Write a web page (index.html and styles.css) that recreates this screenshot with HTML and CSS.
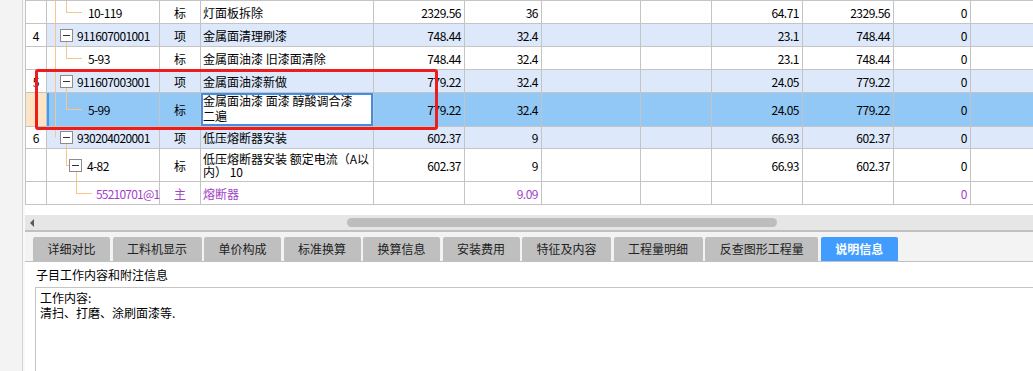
FILE: index.html
```html
<!DOCTYPE html>
<html lang="zh-CN">
<head>
    <meta charset="UTF-8">
    <title>分部分项</title>
    <link rel="stylesheet" href="styles.css">
</head>
<body>
    <div class="app">
        <div class="side"></div>
        <div class="main">
            <div class="grid-wrap">
                <div class="grid">
                    <div class="row">
                        <div class="seq"></div>
                        <div class="code tree-leaf"><span class="code-text">10-119</span></div>
                        <div class="type">标</div>
                        <div class="name">灯面板拆除</div>
                        <div class="num">2329.56</div>
                        <div class="num">36</div>
                        <div></div><div></div>
                        <div class="num">64.71</div>
                        <div class="num">2329.56</div>
                        <div class="num">0</div>
                        <div></div>
                    </div>
                    <div class="row item">
                        <div class="seq">4</div>
                        <div class="code tree-item"><span class="tb"></span><span class="code-text">911607001001</span></div>
                        <div class="type">项</div>
                        <div class="name">金属面清理刷漆</div>
                        <div class="num">748.44</div>
                        <div class="num">32.4</div>
                        <div></div><div></div>
                        <div class="num">23.1</div>
                        <div class="num">748.44</div>
                        <div class="num">0</div>
                        <div></div>
                    </div>
                    <div class="row">
                        <div class="seq"></div>
                        <div class="code tree-leaf"><span class="code-text">5-93</span></div>
                        <div class="type">标</div>
                        <div class="name">金属面油漆 旧漆面清除</div>
                        <div class="num">748.44</div>
                        <div class="num">32.4</div>
                        <div></div><div></div>
                        <div class="num">23.1</div>
                        <div class="num">748.44</div>
                        <div class="num">0</div>
                        <div></div>
                    </div>
                    <div class="row item">
                        <div class="seq">5</div>
                        <div class="code tree-item"><span class="tb"></span><span class="code-text">911607003001</span></div>
                        <div class="type">项</div>
                        <div class="name">金属面油漆新做</div>
                        <div class="num">779.22</div>
                        <div class="num">32.4</div>
                        <div></div><div></div>
                        <div class="num">24.05</div>
                        <div class="num">779.22</div>
                        <div class="num">0</div>
                        <div></div>
                    </div>
                    <div class="row sel tall">
                        <div class="seq"></div>
                        <div class="code tree-leaf"><span class="code-text">5-99</span></div>
                        <div class="type">标</div>
                        <div class="name editing"><span>金属面油漆 面漆 醇酸调合漆 <span class="keep">二遍</span></span></div>
                        <div class="num">779.22</div>
                        <div class="num">32.4</div>
                        <div></div><div></div>
                        <div class="num">24.05</div>
                        <div class="num">779.22</div>
                        <div class="num">0</div>
                        <div></div>
                    </div>
                    <div class="row item short">
                        <div class="seq">6</div>
                        <div class="code tree-item last"><span class="tb"></span><span class="code-text">930204020001</span></div>
                        <div class="type">项</div>
                        <div class="name">低压熔断器安装</div>
                        <div class="num">602.37</div>
                        <div class="num">9</div>
                        <div></div><div></div>
                        <div class="num">66.93</div>
                        <div class="num">602.37</div>
                        <div class="num">0</div>
                        <div></div>
                    </div>
                    <div class="row tall-b">
                        <div class="seq"></div>
                        <div class="code tree-sub"><span class="tb"></span><span class="code-text">4-82</span></div>
                        <div class="type">标</div>
                        <div class="name wrap">低压熔断器安装 额定电流（A以内） 10</div>
                        <div class="num">602.37</div>
                        <div class="num">9</div>
                        <div></div><div></div>
                        <div class="num">66.93</div>
                        <div class="num">602.37</div>
                        <div class="num">0</div>
                        <div></div>
                    </div>
                    <div class="row mat">
                        <div class="seq"></div>
                        <div class="code tree-leaf2"><span class="code-text">55210701@1</span></div>
                        <div class="type">主</div>
                        <div class="name">熔断器</div>
                        <div class="num"></div>
                        <div class="num">9.09</div>
                        <div></div><div></div>
                        <div class="num"></div>
                        <div class="num"></div>
                        <div class="num">0</div>
                        <div></div>
                    </div>
                </div>
                <div class="mark"></div>
            </div>

            <div class="hscroll">
                <span class="arrow"></span>
                <span class="thumb"></span>
            </div>

            <div class="tabs">
                <button class="tab-button">详细对比</button>
                <button class="tab-button">工料机显示</button>
                <button class="tab-button">单价构成</button>
                <button class="tab-button">标准换算</button>
                <button class="tab-button">换算信息</button>
                <button class="tab-button">安装费用</button>
                <button class="tab-button">特征及内容</button>
                <button class="tab-button">工程量明细</button>
                <button class="tab-button">反查图形工程量</button>
                <button class="tab-button active">说明信息</button>
            </div>

            <div class="detail">
                <div class="detail-title">子目工作内容和附注信息</div>
                <div class="detail-box">
                    <div>工作内容:</div>
                    <div>清扫、打磨、涂刷面漆等.</div>
                </div>
            </div>
        </div>
    </div>
</body>
</html>
```

FILE: styles.css
```css
body {
    margin: 0;
    font-family: "Noto Sans CJK SC", "Liberation Sans", sans-serif;
    font-size: 12px;
    color: #000;
    background-color: #f3f3f3;
    overflow: hidden;
}
.app {
    display: flex;
    height: 371px;
}
.side {
    width: 22px;
    flex-shrink: 0;
    border-right: 1px solid #d4d4d4;
}
.main {
    flex: 1;
    min-width: 0;
    padding-left: 2px;
    background-color: #f8f8f8;
    display: flex;
    flex-direction: column;
    overflow: hidden;
}

/* grid */
.grid-wrap {
    position: relative;
    height: 215px;
    background-color: #fff;
    overflow: hidden;
}
.grid {
    width: 1026px;
    border-top: 1px solid #c4c4c4;
}
.row {
    display: grid;
    grid-template-columns: 22px 113px 41px 173px 91px 77px 99px 71px 91px 91px 77px 80px;
    height: 23px;
}
.row.short {
    height: 22px;
}
.row.tall {
    height: 34px;
}
.row.tall-b {
    height: 33px;
}
.row > div {
    box-sizing: border-box;
    display: flex;
    align-items: center;
    padding: 0 3px;
    border-right: 1px solid #c4c4c4;
    border-bottom: 1px solid #c4c4c4;
    white-space: nowrap;
    overflow: hidden;
}
.row > .seq {
    border-left: 1px solid #c4c4c4;
    justify-content: center;
    padding: 0;
}
.row > .type {
    justify-content: center;
}
.row > .num {
    justify-content: flex-end;
    letter-spacing: -0.5px;
}
.code-text {
    letter-spacing: -0.6px;
}
.row > .name {
    padding-left: 2px;
}
.row > .name.wrap {
    white-space: normal;
    align-items: flex-start;
    line-height: 13px;
    padding-top: 3px;
}
.row > .name.editing {
    white-space: normal;
    align-items: flex-start;
    line-height: 15px;
    padding: 0 3px 0 2px;
    background-color: #fff;
    box-shadow: inset 0 0 0 2px #3d8fe8;
}
.keep {
    white-space: nowrap;
}
.row.item > div:not(.seq) {
    background-color: #dde9fb;
}
.row.sel > div {
    background-color: #92c8f6;
}
.row.sel > .seq {
    background-color: #fde4c5;
}
.row.sel > .code {
    box-shadow: inset 2px 0 #3f98f4;
}
.row.sel > .name.editing {
    background-color: #fff;
}
.row.mat > div {
    color: #a23fc6;
}

/* tree lines */
.row > .code {
    padding: 0;
    background-repeat: no-repeat;
}
.tree-leaf {
    background-image: linear-gradient(#f6c68c, #f6c68c), linear-gradient(#f6c68c, #f6c68c), linear-gradient(#f6c68c, #f6c68c);
    background-size: 1px 100%, 1px 50%, 16px 1px;
    background-position: 8px 0, 19px 0, 19px 50%;
}
.row > .tree-leaf {
    padding-left: 41px;
}
.tree-item {
    background-image: linear-gradient(#f6c68c, #f6c68c), linear-gradient(#f6c68c, #f6c68c);
    background-size: 1px 100%, 1px 50%;
    background-position: 8px 0, 19px 100%;
}
.tree-item.last {
    background-size: 1px 50%, 1px 50%;
}
.tree-item .tb {
    margin-left: 13px;
}
.tree-item .code-text {
    margin-left: 4px;
}
.tree-sub {
    background-image: linear-gradient(#f6c68c, #f6c68c), linear-gradient(#f6c68c, #f6c68c), linear-gradient(#f6c68c, #f6c68c);
    background-size: 1px 50%, 3px 1px, 1px 50%;
    background-position: 19px 0, 19px 50%, 29px 100%;
}
.tree-sub .tb {
    margin-left: 22px;
}
.tree-sub .code-text {
    margin-left: 5px;
}
.tree-leaf2 {
    background-image: linear-gradient(#f6c68c, #f6c68c), linear-gradient(#f6c68c, #f6c68c);
    background-size: 1px 50%, 16px 1px;
    background-position: 29px 0, 29px 50%;
}
.row > .tree-leaf2 {
    padding-left: 49px;
    overflow: visible;
}
.tree-leaf2 .code-text {
    letter-spacing: -0.8px;
}
.tb {
    width: 13px;
    height: 13px;
    box-sizing: border-box;
    flex-shrink: 0;
    border: 1px solid #8c8c8c;
    background-color: #fff;
    display: flex;
    align-items: center;
    justify-content: center;
}
.tb::after {
    content: "";
    width: 7px;
    height: 1px;
    background-color: #333;
}

/* red highlight drawn over the grid */
.mark {
    position: absolute;
    left: 10px;
    top: 69px;
    width: 403px;
    height: 61px;
    box-sizing: border-box;
    border: 3px solid #ee1d1d;
    border-radius: 3px;
}

/* horizontal scrollbar */
.hscroll {
    height: 15px;
    flex-shrink: 0;
    background-color: #e6e6e6;
    border-bottom: 2px solid #c0c0c0;
    display: flex;
    align-items: center;
}
.hscroll .arrow {
    width: 0;
    height: 0;
    margin-left: 5px;
    border-right: 4px solid #5a5a5a;
    border-top: 4px solid transparent;
    border-bottom: 4px solid transparent;
}
.hscroll .thumb {
    width: 430px;
    height: 9px;
    margin-left: 313px;
    border-radius: 5px;
    background-color: #bdbdbd;
}

/* tabs */
.tabs {
    height: 29px;
    flex-shrink: 0;
    display: flex;
    align-items: flex-end;
    gap: 2.5px;
    padding-left: 8px;
    background-color: #f3f3f3;
    border-bottom: 1px solid #c0c0c0;
}
.tab-button {
    height: 24px;
    padding: 0 14.5px;
    border: none;
    border-radius: 2px 2px 0 0;
    background-color: #bfbfbf;
    color: #222;
    font-family: inherit;
    font-size: 12px;
    line-height: 24px;
    cursor: pointer;
}
.tab-button.active {
    background-color: #409cff;
    color: #fff;
    font-weight: bold;
}

/* detail panel */
.detail {
    flex: 1;
    display: flex;
    flex-direction: column;
    padding: 6px 0 0 10px;
    background-color: #fff;
}
.detail-title {
    margin-left: 1px;
    line-height: 14px;
    margin-bottom: 5px;
}
.detail-box {
    flex: 1;
    padding: 2px 4px;
    line-height: 15px;
    border-top: 1px solid #c4c4c4;
    border-left: 1px solid #c4c4c4;
}
```
